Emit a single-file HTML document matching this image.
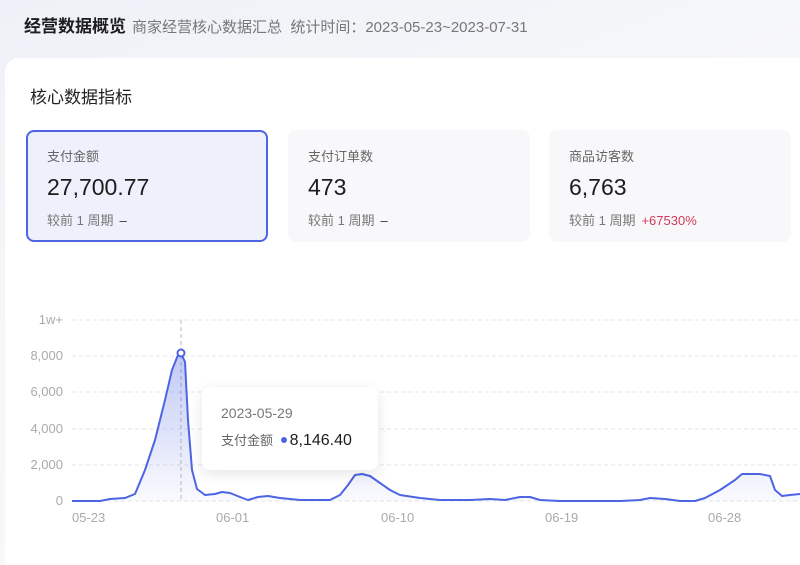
<!DOCTYPE html>
<html><head><meta charset="utf-8"><style>
*{margin:0;padding:0;box-sizing:border-box}
html,body{width:800px;height:565px;overflow:hidden}
body{background:linear-gradient(160deg,#eef1f7 0%,#f6f7fa 40%,#f7f8fa 100%);font-family:"Liberation Sans","Noto Sans CJK SC",sans-serif;position:relative}
.hd{position:absolute;left:24px;top:12px;font-size:17px;color:#1d1d1f;font-weight:bold;white-space:nowrap}
.hd span{font-weight:normal;color:#777;font-size:15px;margin-left:6px}
.main{position:absolute;left:5px;top:58px;width:795px;height:507px;background:#fff;border-radius:14px 0 0 0}
.t{position:absolute;left:30px;top:83px;font-size:17px;color:#222}
.card{position:absolute;top:130px;width:242px;height:112px;border-radius:8px;background:#f8f8fa;padding:16px 0 0 20px}
.card.a{background:#eef0fb;border:2px solid #4d64e3;padding:14px 0 0 19px}
.l{font-size:13px;color:#666}
.v{font-size:23px;color:#1d1d1f;margin-top:9px}
.s{font-size:13px;color:#777;margin-top:9px}
.s b{font-weight:normal;color:#333;margin-left:6px}
.s i{font-style:normal;color:#d23a5a;margin-left:6px}
.yl{position:absolute;left:0;width:63px;text-align:right;font-size:13px;color:#aaa}
.xl{position:absolute;top:510px;font-size:13px;color:#aaa}
.tip{position:absolute;left:202px;top:387px;width:176px;height:83px;background:#fff;border-radius:8px;box-shadow:0 4px 14px rgba(0,0,0,.1);padding:18px 0 0 19px}
</style></head><body>
<div class="hd">经营数据概览<span>商家经营核心数据汇总&nbsp; 统计时间：2023-05-23~2023-07-31</span></div>
<div class="main"></div>
<div class="t">核心数据指标</div>
<div class="card a" style="left:26px"><div class="l">支付金额</div><div class="v">27,700.77</div><div class="s">较前 1 周期<b>–</b></div></div>
<div class="card" style="left:288px"><div class="l">支付订单数</div><div class="v">473</div><div class="s">较前 1 周期<b>–</b></div></div>
<div class="card" style="left:549px"><div class="l">商品访客数</div><div class="v">6,763</div><div class="s">较前 1 周期<i>+67530%</i></div></div>
<div class="yl" style="top:312px">1w+</div>
<div class="yl" style="top:348px">8,000</div>
<div class="yl" style="top:384px">6,000</div>
<div class="yl" style="top:421px">4,000</div>
<div class="yl" style="top:457px">2,000</div>
<div class="yl" style="top:493px">0</div>
<div class="xl" style="left:72px">05-23</div>
<div class="xl" style="left:216px">06-01</div>
<div class="xl" style="left:381px">06-10</div>
<div class="xl" style="left:545px">06-19</div>
<div class="xl" style="left:708px">06-28</div>
<svg width="800" height="565" style="position:absolute;left:0;top:0">
<defs><linearGradient id="g" x1="0" y1="0" x2="0" y2="1"><stop offset="0" stop-color="#4d64e3" stop-opacity=".35"/><stop offset="1" stop-color="#4d64e3" stop-opacity=".03"/></linearGradient></defs>
<g stroke="#e6e6e6" stroke-dasharray="4 3"><line x1="72" y1="320" x2="800" y2="320"/><line x1="72" y1="356" x2="800" y2="356"/><line x1="72" y1="392" x2="800" y2="392"/><line x1="72" y1="429" x2="800" y2="429"/><line x1="72" y1="465" x2="800" y2="465"/><line x1="72" y1="501" x2="800" y2="501"/></g>
<line x1="181" y1="320" x2="181" y2="501" stroke="#bbb" stroke-dasharray="4 3"/>
<path d="M72,501 L100,501 L110,499 L125,498 L135,494 L145,470 L155,440 L165,400 L172,370 L178,355 L181,353 L185,362 L188,420 L192,470 L197,489 L205,495 L215,494 L222,492 L230,493 L240,497 L248,500 L258,497 L268,496 L280,498 L300,500 L330,500 L340,495 L348,485 L355,475 L362,474 L370,476 L380,483 L390,490 L400,495 L420,498 L440,500 L470,500 L490,499 L505,500 L520,497 L530,497 L540,500 L560,501 L620,501 L640,500 L650,498 L665,499 L680,501 L695,501 L705,498 L720,490 L735,480 L742,474 L760,474 L770,476 L775,490 L782,496 L790,495 L800,494 L800,501 Z" fill="url(#g)"/>
<polyline points="72,501 100,501 110,499 125,498 135,494 145,470 155,440 165,400 172,370 178,355 181,353 185,362 188,420 192,470 197,489 205,495 215,494 222,492 230,493 240,497 248,500 258,497 268,496 280,498 300,500 330,500 340,495 348,485 355,475 362,474 370,476 380,483 390,490 400,495 420,498 440,500 470,500 490,499 505,500 520,497 530,497 540,500 560,501 620,501 640,500 650,498 665,499 680,501 695,501 705,498 720,490 735,480 742,474 760,474 770,476 775,490 782,496 790,495 800,494" fill="none" stroke="#4d64e3" stroke-width="2" stroke-linejoin="round"/>
<circle cx="181" cy="353" r="3.5" fill="#fff" stroke="#4d64e3" stroke-width="2"/>
</svg>
<div class="tip"><div style="font-size:14px;color:#777">2023-05-29</div><div style="margin-top:9px;font-size:13px;color:#666">支付金额 <span style="display:inline-block;width:6px;height:6px;border-radius:50%;background:#4d64e3;margin:0 3px 2px 4px"></span><span style="font-size:16px;color:#1d1d1f">8,146.40</span></div></div>
</body></html>
